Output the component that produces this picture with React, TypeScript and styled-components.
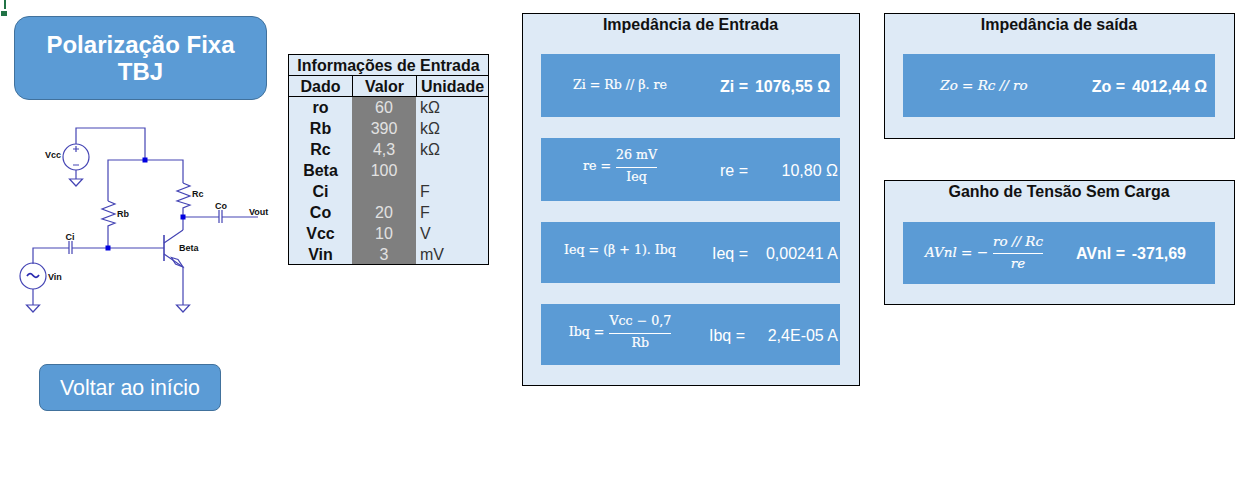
import React from "react";
import styled, { createGlobalStyle } from "styled-components";

const GlobalStyle = createGlobalStyle`
    html, body {
        margin: 0;
        padding: 0;
        background: #fff;
        font-family: "Liberation Sans", Arial, sans-serif;
    }
`;

const Page = styled.div`
    position: relative;
    width: 1247px;
    height: 481px;
    overflow: hidden;
    display: flex;
    align-items: flex-start;
    background: #fff;
`;

// excel cell selection left in the corner of the sheet
const CellHandle = styled.div`
    position: absolute;
    left: 0;
    top: 0;
    width: 7px;
    height: 16px;

    &::before {
        content: "";
        position: absolute;
        left: 4px;
        top: 0;
        width: 2px;
        height: 9px;
        background: #217346;
    }
    &::after {
        content: "";
        position: absolute;
        left: 1px;
        top: 11px;
        width: 6px;
        height: 5px;
        background: #217346;
    }
`;

const LeftColumn = styled.div`
    flex: 0 0 253px;
    width: 253px;
    min-width: 0;
    margin-left: 14px;
    padding-top: 16px;
    display: flex;
    flex-direction: column;
`;

const TitleShape = styled.div`
    box-sizing: border-box;
    height: 84px;
    display: flex;
    align-items: center;
    justify-content: center;
    text-align: center;
    background: #5b9bd5;
    border: 1px solid #41719c;
    border-radius: 15px;
    color: #fff;
    font-size: 24px;
    font-weight: 700;
    line-height: 27px;
`;

const CircuitSvg = styled.svg`
    display: block;
    flex: none;
    width: 260px;
    height: 205px;
    margin-top: 15px;

    text {
        font-family: "Liberation Sans", Arial, sans-serif;
        font-size: 9px;
        font-weight: 700;
        fill: #111;
    }
`;

const BackButton = styled.button`
    box-sizing: border-box;
    width: 182px;
    height: 47px;
    margin: 44px 0 0 25px;
    padding: 2px 0 0;
    background: #5b9bd5;
    border: 1px solid #41719c;
    border-radius: 8px;
    color: #fff;
    font-family: inherit;
    font-size: 21.33px;
`;

const InputTable = styled.div`
    box-sizing: border-box;
    flex: 0 0 201px;
    height: 211px;
    overflow: hidden;
    margin: 54px 0 0 21px;
    border: 1px solid #000;
    background: #deeaf6;
    display: grid;
    grid-template-columns: 63px 64px 72px;
    grid-auto-rows: 21px;
    font-size: 16px;
    line-height: 21px;
    color: #111;
`;

const TableTitle = styled.div`
    grid-column: 1 / -1;
    text-align: center;
    font-weight: 700;
    border-bottom: 1px solid #000;
`;

const HeadCell = styled.div<{ $divided?: boolean }>`
    text-align: center;
    font-weight: 700;
    border-bottom: 1px solid #000;
    border-left: ${({ $divided }) => ($divided ? "1px solid #000" : "none")};
`;

const NameCell = styled.div`
    text-align: center;
    font-weight: 700;
`;

const ValueCell = styled.div`
    text-align: center;
    background: #7f7f7f;
    color: #e2e2e2;
`;

const UnitCell = styled.div`
    padding-left: 4px;
    color: #333;
`;

const EntryPanel = styled.section`
    box-sizing: border-box;
    flex: 0 0 338px;
    height: 373px;
    margin: 13px 0 0 33px;
    padding: 0 19px 0 18px;
    background: #deeaf6;
    border: 1px solid #000;
`;

const RightColumn = styled.div`
    flex: 0 0 351px;
    margin: 13px 0 0 24px;
    display: flex;
    flex-direction: column;
    gap: 41px;
`;

const SidePanel = styled.section<{ $height: number }>`
    box-sizing: border-box;
    height: ${({ $height }) => $height}px;
    padding: 0 19px 0 18px;
    background: #deeaf6;
    border: 1px solid #000;
`;

const PanelTitle = styled.h2<{ $gap: number }>`
    margin: 0 0 ${({ $gap }) => $gap}px;
    height: 21px;
    text-align: center;
    font-size: 16px;
    line-height: 21px;
    font-weight: 700;
    color: #111;
`;

const EntryRows = styled.div`
    display: flex;
    flex-direction: column;
    gap: 21px;
`;

const ResultRow = styled.div<{ $columns: string; $height: number }>`
    height: ${({ $height }) => $height}px;
    display: grid;
    grid-template-columns: ${({ $columns }) => $columns};
    align-items: center;
    background: #5b9bd5;
    color: #fff;
`;

const Formula = styled.div<{ $italic?: boolean; $lift?: number }>`
    display: flex;
    align-items: center;
    justify-content: center;
    gap: 5px;
    margin-top: ${({ $lift }) => -($lift ?? 0)}px;
    font-family: "DejaVu Serif", "Liberation Serif", serif;
    font-size: ${({ $italic }) => ($italic ? "13.5px" : "12.6px")};
    font-style: ${({ $italic }) => ($italic ? "italic" : "normal")};
    -webkit-text-stroke: 0.2px #fff;
    white-space: nowrap;
`;

const Fraction = styled.span`
    display: inline-flex;
    flex-direction: column;
    align-items: center;
    line-height: 18px;

    span:first-child {
        padding-bottom: 3px;
    }
    span + span {
        border-top: 1px solid #fff;
        align-self: stretch;
        text-align: center;
    }
`;

const ResultLabel = styled.div<{ $bold?: boolean; $shift?: number }>`
    text-align: right;
    padding-top: 2px;
    padding-right: ${({ $shift }) => $shift ?? 0}px;
    font-size: 16px;
    font-weight: ${({ $bold }) => ($bold ? 700 : 400)};
    white-space: nowrap;
`;

const ResultValue = styled.div<{ $bold?: boolean; $inset: number }>`
    text-align: right;
    padding-top: 2px;
    padding-right: ${({ $inset }) => $inset}px;
    font-size: 16px;
    font-weight: ${({ $bold }) => ($bold ? 700 : 400)};
    white-space: nowrap;
`;

const inputRows = [
    ["ro", "60", "kΩ"],
    ["Rb", "390", "kΩ"],
    ["Rc", "4,3", "kΩ"],
    ["Beta", "100", ""],
    ["Ci", "", "F"],
    ["Co", "20", "F"],
    ["Vcc", "10", "V"],
    ["Vin", "3", "mV"],
];

const WIRE = "#4444b4";

const Ground = ({ x, y }: { x: number; y: number }) => (
    <path d={`M${x - 6.5} ${y}H${x + 6.5}L${x} ${y + 7}Z`} fill="none" stroke={WIRE} strokeWidth="1.2" />
);

const Node = ({ x, y }: { x: number; y: number }) => (
    <rect x={x - 2.5} y={y - 2.5} width="5" height="5" fill="#0000e0" />
);

const Circuit = () => (
    <CircuitSvg viewBox="14 115 260 205">
        <g fill="none" stroke={WIRE} strokeWidth="1.2">
            {/* supply and top rail */}
            <path d="M76 144V128H145V160" />
            <path d="M76 170V179" />
            <circle cx="76" cy="157" r="13" />
            <path d="M73 149H79M76 146V152M73 165H79" />
            <path d="M108 201V160H183V183" />
            {/* Rb */}
            <path d="M108 201L115 204L102 209L115 214L102 219L115 223L108 226V248" />
            {/* Rc */}
            <path d="M183 183L190 186L177 191L190 196L177 201L190 205L183 208V230" />
            {/* Co and output */}
            <path d="M183 217H219M222 217H258M219 210V223M222 210V223" />
            {/* Ci and base */}
            <path d="M33 264V248H69M72 248H164M69 241V254M72 241V254" />
            {/* transistor */}
            <path d="M164 235V261" strokeWidth="1.6" />
            <path d="M164 243L183 230M164 254L183 267V305" />
            <path d="M171.5 257.5L178 259.5L183 267L175.5 264Z" />
            {/* Vin */}
            <path d="M33 289V305" />
            <circle cx="33" cy="276" r="13" />
            <path d="M27 276C29 273 31 273 33 275.5C35 278 37 278 39 275" strokeWidth="1.8" stroke="#2a2ab0" />
        </g>
        <Ground x={76} y={179} />
        <Ground x={183} y={305} />
        <Ground x={33} y={305} />
        <Node x={145} y={160} />
        <Node x={108} y={248} />
        <Node x={183} y={217} />
        <text x="45" y="158">Vcc</text>
        <text x="192" y="197">Rc</text>
        <text x="117" y="217">Rb</text>
        <text x="65.5" y="240">Ci</text>
        <text x="215" y="209">Co</text>
        <text x="249" y="215">Vout</text>
        <text x="179" y="251">Beta</text>
        <text x="48" y="280">Vin</text>
    </CircuitSvg>
);

const ENTRY_COLUMNS = "158px 49px 92px";
const SIDE_COLUMNS = "162px 60px 90px";

export default function App() {
    return (
        <Page>
            <GlobalStyle />
            <CellHandle />

            <LeftColumn>
                <TitleShape>
                    Polarização Fixa
                    <br />
                    TBJ
                </TitleShape>
                <Circuit />
                <BackButton>Voltar ao início</BackButton>
            </LeftColumn>

            <InputTable>
                <TableTitle>Informações de Entrada</TableTitle>
                <HeadCell>Dado</HeadCell>
                <HeadCell $divided>Valor</HeadCell>
                <HeadCell $divided>Unidade</HeadCell>
                {inputRows.map(([name, value, unit]) => (
                    <React.Fragment key={name}>
                        <NameCell>{name}</NameCell>
                        <ValueCell>{value}</ValueCell>
                        <UnitCell>{unit}</UnitCell>
                    </React.Fragment>
                ))}
            </InputTable>

            <EntryPanel>
                <PanelTitle $gap={19}>Impedância de Entrada</PanelTitle>
                <EntryRows>
                    <ResultRow $columns={ENTRY_COLUMNS} $height={63}>
                        <Formula $lift={2}>Zi = Rb // β. re</Formula>
                        <ResultLabel $bold>Zi =</ResultLabel>
                        <ResultValue $bold $inset={10}>1076,55 Ω</ResultValue>
                    </ResultRow>
                    <ResultRow $columns={ENTRY_COLUMNS} $height={63}>
                        <Formula $lift={8}>
                            re =
                            <Fraction>
                                <span>26 mV</span>
                                <span>Ieq</span>
                            </Fraction>
                        </Formula>
                        <ResultLabel>re =</ResultLabel>
                        <ResultValue $inset={2}>10,80 Ω</ResultValue>
                    </ResultRow>
                    <ResultRow $columns={ENTRY_COLUMNS} $height={61}>
                        <Formula $lift={6}>Ieq = (β + 1). Ibq</Formula>
                        <ResultLabel>Ieq =</ResultLabel>
                        <ResultValue $inset={2}>0,00241 A</ResultValue>
                    </ResultRow>
                    <ResultRow $columns={ENTRY_COLUMNS} $height={61}>
                        <Formula $lift={6}>
                            Ibq =
                            <Fraction>
                                <span>Vcc − 0,7</span>
                                <span>Rb</span>
                            </Fraction>
                        </Formula>
                        <ResultLabel $shift={3}>Ibq =</ResultLabel>
                        <ResultValue $inset={2}>2,4E-05 A</ResultValue>
                    </ResultRow>
                </EntryRows>
            </EntryPanel>

            <RightColumn>
                <SidePanel $height={126}>
                    <PanelTitle $gap={19}>Impedância de saída</PanelTitle>
                    <ResultRow $columns={SIDE_COLUMNS} $height={63}>
                        <Formula $italic $lift={2}>Zo = Rc // ro</Formula>
                        <ResultLabel $bold>Zo =</ResultLabel>
                        <ResultValue $bold $inset={8}>4012,44 Ω</ResultValue>
                    </ResultRow>
                </SidePanel>
                <SidePanel $height={125}>
                    <PanelTitle $gap={20}>Ganho de Tensão Sem Carga</PanelTitle>
                    <ResultRow $columns={SIDE_COLUMNS} $height={62}>
                        <Formula $italic $lift={3}>
                            AVnl = −
                            <Fraction>
                                <span>ro // Rc</span>
                                <span>re</span>
                            </Fraction>
                        </Formula>
                        <ResultLabel $bold>AVnl =</ResultLabel>
                        <ResultValue $bold $inset={29}>-371,69</ResultValue>
                    </ResultRow>
                </SidePanel>
            </RightColumn>
        </Page>
    );
}
